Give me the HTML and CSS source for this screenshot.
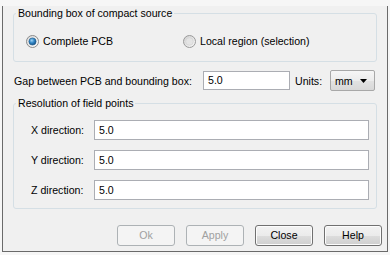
FILE: index.html
```html
<!DOCTYPE html>
<html lang="en">
<head>
    <meta charset="UTF-8">
    <meta name="viewport" content="width=device-width, initial-scale=1.0">
    <title>Compact Source</title>
    <link rel="stylesheet" href="styles.css">
</head>
<body>
    <div class="dialog">
        <fieldset class="group group-bbox">
            <legend>Bounding box of compact source</legend>
            <div class="radios">
                <label class="radio radio-complete">
                    <svg width="13" height="13" viewBox="0 0 13 13">
                        <defs>
                            <radialGradient id="dotBlue" cx="0.4" cy="0.35" r="0.7">
                                <stop offset="0" stop-color="#9fd3f5"/>
                                <stop offset="0.5" stop-color="#2f84c4"/>
                                <stop offset="1" stop-color="#174e80"/>
                            </radialGradient>
                            <linearGradient id="ringFill" x1="0" y1="0" x2="1" y2="1">
                                <stop offset="0" stop-color="#d8d8d8"/>
                                <stop offset="1" stop-color="#ffffff"/>
                            </linearGradient>
                        </defs>
                        <circle cx="6.5" cy="6.5" r="6" fill="url(#ringFill)" stroke="#8a8a8a"/>
                        <circle cx="6.5" cy="6.5" r="3.6" fill="url(#dotBlue)" stroke="#1d5a8c" stroke-width="0.6"/>
                    </svg>
                    <span>Complete PCB</span>
                </label>
                <label class="radio radio-local">
                    <svg width="13" height="13" viewBox="0 0 13 13">
                        <defs>
                            <linearGradient id="ringFill2" x1="0" y1="0" x2="1" y2="1">
                                <stop offset="0" stop-color="#cfcfcf"/>
                                <stop offset="1" stop-color="#fafafa"/>
                            </linearGradient>
                        </defs>
                        <circle cx="6.5" cy="6.5" r="6" fill="url(#ringFill2)" stroke="#9a9a9a"/>
                        <circle cx="6.5" cy="6.5" r="3.8" fill="#e4e4e4" stroke="#d0d0d0" stroke-width="0.6"/>
                    </svg>
                    <span>Local region (selection)</span>
                </label>
            </div>
        </fieldset>

        <div class="gap-row">
            <span class="gap-label">Gap between PCB and bounding box:</span>
            <div class="input gap-input">5.0</div>
            <span class="units-label">Units:</span>
            <div class="combo">
                <span>mm</span>
                <svg width="7" height="4" viewBox="0 0 7 4"><path d="M0 0H7L3.5 4Z" fill="#000"/></svg>
            </div>
        </div>

        <fieldset class="group group-res">
            <legend>Resolution of field points</legend>
            <div class="field-row">
                <span class="field-label">X direction:</span>
                <div class="input field-input">5.0</div>
            </div>
            <div class="field-row">
                <span class="field-label">Y direction:</span>
                <div class="input field-input">5.0</div>
            </div>
            <div class="field-row">
                <span class="field-label">Z direction:</span>
                <div class="input field-input">5.0</div>
            </div>
        </fieldset>

        <div class="buttons">
            <div class="btn disabled">Ok</div>
            <div class="btn disabled">Apply</div>
            <div class="btn">Close</div>
            <div class="btn">Help</div>
        </div>
    </div>
</body>
</html>
```

FILE: styles.css
```css
body {
    margin: 0;
    padding-left: 2px;
    font-family: "Liberation Sans", Arial, sans-serif;
    font-size: 10.6px;
    color: #000;
    background-color: #f6f6f6;
}

.dialog {
    width: 384px;
    background-color: #f0f0f0;
    border: 1px solid #6a6a6a;
    border-top: none;
    padding-bottom: 5px;
}

/* group boxes */
.group {
    margin: 0 0 0 10px;
    width: 364px;
    box-sizing: border-box;
    border: 1px solid #d5dfe5;
    border-radius: 3px;
    padding: 0;
    min-width: 0;
}

.group legend {
    line-height: 14px;
    padding: 0 2px;
}

.group-bbox {
    margin-top: 6px;
    padding: 15px 0 13px 12px;
}

.group-bbox legend {
    margin-left: -10px;
}

.radios {
    display: flex;
    height: 13px;
    align-items: center;
}

.radio {
    display: flex;
    align-items: center;
    gap: 4px;
    line-height: 13px;
}

.radio svg {
    display: block;
}

.radio-complete {
    width: 157px;
}

/* gap row */
.gap-row {
    display: flex;
    align-items: center;
    height: 21px;
    margin-top: 8px;
    padding-left: 11px;
}

.gap-label {
    width: 189px;
}

.input {
    box-sizing: border-box;
    height: 20px;
    line-height: 18px;
    padding-left: 4px;
    background-color: #fff;
    border: 1px solid #abadb3;
}

.gap-input {
    width: 87px;
    height: 19px;
    line-height: 17px;
}

.units-label {
    margin-left: 5px;
    width: 35px;
}

.combo {
    box-sizing: border-box;
    width: 45px;
    height: 21px;
    display: flex;
    align-items: center;
    justify-content: space-between;
    padding: 0 7px 0 4px;
    border: 1px solid #a8a8a8;
    border-radius: 2px;
    background: linear-gradient(#f6f6f6, #ececec 50%, #e2e2e2 51%, #d8d8d8);
}

.combo svg {
    display: block;
}

/* resolution group */
.group-res {
    margin-top: 5px;
    padding: 10px 7px 8px 17px;
}

.group-res legend {
    margin-left: -15px;
}

.field-row {
    display: flex;
    align-items: center;
    margin-bottom: 10px;
}

.field-row:last-child {
    margin-bottom: 0;
}

.field-label {
    width: 63px;
}

.field-input {
    flex: 1;
}

/* buttons */
.buttons {
    display: flex;
    justify-content: flex-end;
    gap: 11px;
    margin-top: 16px;
    padding-right: 5px;
}

.btn {
    box-sizing: border-box;
    width: 58px;
    height: 21px;
    line-height: 19px;
    text-align: center;
    border: 1px solid #707070;
    border-radius: 3px;
    background: linear-gradient(#f2f2f2, #ebebeb 50%, #dddddd 51%, #cfcfcf);
    box-shadow: inset 0 0 0 1px #fcfcfc;
}

.btn.disabled {
    color: #a0a0a0;
    border-color: #adb2b5;
    background: #f4f4f4;
    box-shadow: none;
}
```
